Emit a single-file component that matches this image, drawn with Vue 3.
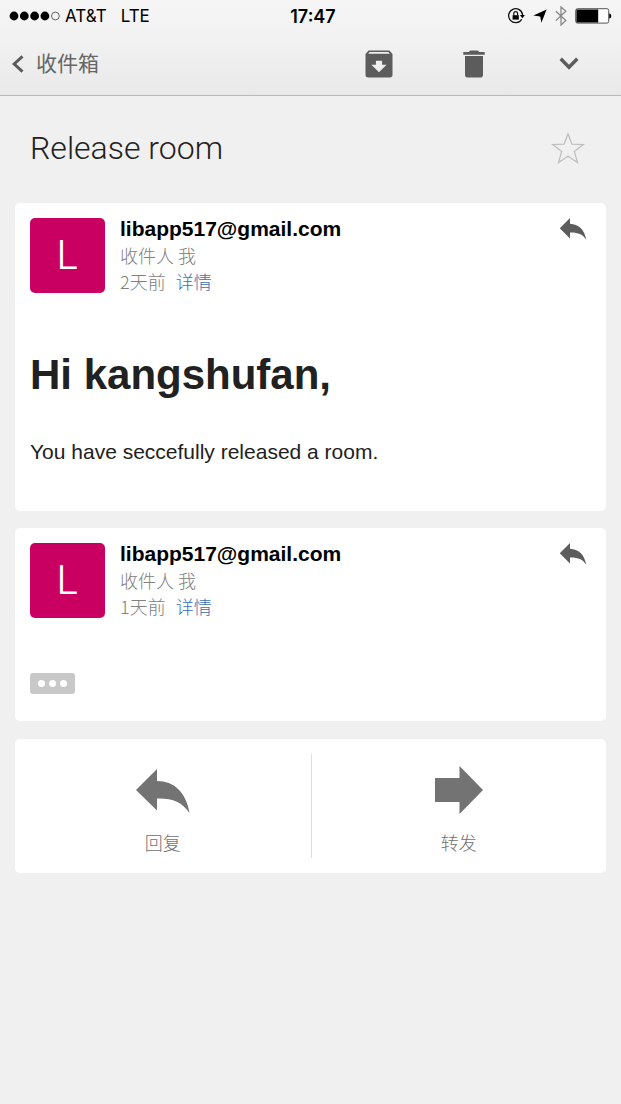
<script setup>
const messages = [
  {
    id: 1,
    sender: 'libapp517@gmail.com',
    age: '2天前',
    greeting: 'Hi kangshufan,',
    body: 'You have seccefully released a room.',
  },
  { id: 2, sender: 'libapp517@gmail.com', age: '1天前' },
]
</script>

<template>
  <div class="screen">
    <header class="top">
      <div class="status">
        <div class="carrier">
          <svg class="signal" viewBox="0 0 52 12" aria-hidden="true">
            <circle cx="5" cy="6" r="4.4" />
            <circle cx="15.3" cy="6" r="4.4" />
            <circle cx="25.6" cy="6" r="4.4" />
            <circle cx="35.9" cy="6" r="4.4" />
            <circle cx="46.4" cy="6" r="3.9" fill="none" stroke="#555" stroke-width="0.9" />
          </svg>
          <span>AT&amp;T</span>
          <span class="network">LTE</span>
        </div>
        <time class="clock">17:47</time>
        <div class="indicators">
          <svg width="18" height="18" viewBox="0 0 18 18" aria-hidden="true">
            <path d="M14.7 12.2A7 7 0 1 1 15.6 8" fill="none" stroke="#111" stroke-width="1.3" />
            <path d="M12.9 8h5l-2.5 3.2z" />
            <path d="M5.6 8.2h6.2v4.4H5.6z" />
            <path d="M6.8 8.4V6.5a1.9 1.9 0 0 1 3.8 0v1.9" fill="none" stroke="#111" stroke-width="1.2" />
          </svg>
          <svg width="14" height="14" viewBox="0 0 14 14" aria-hidden="true">
            <path d="M13.6.4 8.4 13.8 7.2 7.6.4 6.4z" />
          </svg>
          <svg width="12" height="20" viewBox="0 0 12 20" aria-hidden="true">
            <path d="M.8 5.2 10.8 14.6 6 19V1l4.8 4.2L.8 14.6" fill="none" stroke="#888" stroke-width="1.3" />
          </svg>
          <svg width="37" height="16" viewBox="0 0 37 16" aria-hidden="true">
            <rect x=".7" y=".7" width="33" height="14.4" rx="1.8" fill="#fff" stroke="#555" stroke-width="1" />
            <path d="M1.4 1.4h21.8v13H1.4zM34.2 5.4c1.6.3 2 1.2 2 2.5s-.4 2.2-2 2.5z" />
          </svg>
        </div>
      </div>
      <nav class="toolbar">
        <button class="back" type="button">
          <svg width="12" height="18" viewBox="0 0 12 18" aria-hidden="true">
            <path d="M10.5 1.3 2.2 9l8.3 7.7" fill="none" stroke="#5c5c5c" stroke-width="3" />
          </svg>
          <span>收件箱</span>
        </button>
        <div class="tools">
          <button class="icon" type="button" aria-label="归档">
            <svg width="28" height="28" viewBox="0 0 28 28" fill="#5c5c5c" aria-hidden="true">
              <path fill-rule="evenodd" d="M3.6.5h20.8L27.5 4v20.8a2.7 2.7 0 0 1-2.7 2.7H3.2A2.7 2.7 0 0 1 .5 24.8V4zM4.6 1.9 3.2 3.7h21.6l-1.4-1.8zM10.9 10.8v4H6.4l7.6 7.4 7.6-7.4h-4.5v-4z" />
            </svg>
          </button>
          <button class="icon" type="button" aria-label="删除">
            <svg width="22" height="28" viewBox="0 0 22 28" fill="#5c5c5c" aria-hidden="true">
              <path d="M.3 2h5.5L7.2.5h7.6L16.2 2h5.5v2.8H.3zM2 6h18v18.7a2.8 2.8 0 0 1-2.8 2.8H4.8A2.8 2.8 0 0 1 2 24.7z" />
            </svg>
          </button>
          <button class="icon" type="button" aria-label="更多">
            <svg width="20" height="13" viewBox="0 0 20 13" aria-hidden="true">
              <path d="m1.7 1.7 8.3 8.5 8.3-8.5" fill="none" stroke="#5c5c5c" stroke-width="3.4" />
            </svg>
          </button>
        </div>
      </nav>
    </header>

    <main>
      <div class="subject">
        <h1>Release room</h1>
        <button class="icon" type="button" aria-label="加星标">
          <svg width="34" height="32" viewBox="0 0 34 32" aria-hidden="true">
            <path d="m17 1.8 3.9 10.4 11.5.3-9.1 7 3.2 11L17 24.2l-9.5 6.3 3.2-11-9.1-7 11.5-.3z" fill="none" stroke="#bdbdbd" stroke-width="1.2" />
          </svg>
        </button>
      </div>

      <div class="thread">
        <article v-for="m in messages" :key="m.id" class="card message">
          <div class="head">
            <div class="avatar">L</div>
            <div class="meta">
              <strong>{{ m.sender }}</strong>
              <span>收件人 我</span>
              <span class="when">{{ m.age }}<a href="#">详情</a></span>
            </div>
            <button class="icon reply" type="button" aria-label="回复">
              <svg width="28" height="22" viewBox="0 0 54 44" fill="#5c5c5c" aria-hidden="true">
                <path d="M.5 20.5 21 0v11.5C38 12.500 50 23 53.500 43.500 46 32 36 28.500 21 29v12z" />
              </svg>
            </button>
          </div>
          <template v-if="m.greeting">
            <h2>{{ m.greeting }}</h2>
            <p>{{ m.body }}</p>
          </template>
          <button v-else class="expand" type="button" aria-label="展开">
            <i></i><i></i><i></i>
          </button>
        </article>

        <div class="card actions">
          <button type="button">
            <svg width="54" height="48" viewBox="0 0 54 48" fill="#737373" aria-hidden="true">
              <path d="M0 24 21 3v12C38 15 50 26 53.600 47 46 36 36 32 21 32.500v12z" />
            </svg>
            <span>回复</span>
          </button>
          <button type="button">
            <svg width="48" height="48" viewBox="0 0 48 48" fill="#737373" aria-hidden="true">
              <path d="M0 12h24.500V0L48 24 24.500 48V36H0z" />
            </svg>
            <span>转发</span>
          </button>
        </div>
      </div>
    </main>
  </div>
</template>

<style>
body {
  background: #f0f0f0;
}
</style>

<style scoped>
.screen {
  min-height: 100vh;
  background: #f0f0f0;
  color: #212121;
  font-family: "Liberation Sans", "Noto Sans CJK SC", sans-serif;
}
button {
  border: 0;
  padding: 0;
  background: none;
  color: inherit;
  font: inherit;
  cursor: pointer;
}
svg {
  display: block;
}
.top {
  background: linear-gradient(#f5f5f5, #f2f2f2 40%, #e9e9e9);
  border-bottom: 1px solid #b8b8b8;
}
.status {
  display: grid;
  grid-template-columns: 1fr auto 1fr;
  align-items: center;
  height: 32px;
  padding: 0 9px;
  color: #000;
  font-family: Inter, sans-serif;
  font-size: 17px;
}
.carrier {
  display: flex;
  align-items: center;
  gap: 4px;
}
.signal {
  width: 52px;
  height: 12px;
}
.network {
  margin-left: 10px;
}
.clock {
  font-size: 18px;
  font-weight: 600;
  padding-left: 5px;
}
.indicators {
  display: flex;
  justify-content: flex-end;
  align-items: center;
  gap: 8px;
}
.toolbar {
  display: flex;
  align-items: center;
  justify-content: space-between;
  height: 63px;
  padding: 0 41px 0 12px;
}
.back {
  display: flex;
  align-items: center;
  gap: 12px;
  color: #666;
  font-size: 21px;
  line-height: 30px;
}
.tools {
  display: grid;
  grid-template-columns: repeat(3, 22px);
  justify-items: center;
  gap: 73px;
}
.icon {
  display: grid;
  place-items: center;
}
.subject {
  display: flex;
  align-items: center;
  justify-content: space-between;
  height: 103px;
  padding: 0 36px 4px 30px;
}
h1 {
  margin: 0;
  font-family: Roboto, sans-serif;
  font-size: 32px;
  font-weight: 300;
  line-height: 40px;
}
.thread {
  display: grid;
  gap: 17px;
  padding: 0 15px 24px;
}
.card {
  background: #fff;
  border-radius: 5px;
}
.message {
  padding: 13px 15px 27px;
}
.head {
  display: flex;
  align-items: center;
  gap: 15px;
}
.avatar {
  display: grid;
  place-items: center;
  width: 75px;
  height: 75px;
  border-radius: 5px;
  background: #c90062;
  color: #fff;
  font-family: Inter, sans-serif;
  font-size: 40px;
  font-weight: 300;
  line-height: 48px;
}
.meta {
  display: grid;
  flex: 1;
  grid-auto-rows: 26px;
  line-height: 26px;
  color: #808080;
  font-family: "Noto Sans CJK SC", sans-serif;
  font-size: 18px;
  font-weight: 300;
}
.meta strong {
  color: #000;
  font-family: "Liberation Sans", sans-serif;
  font-size: 21px;
  font-weight: 700;
}
.when a {
  margin-left: 10px;
  color: #3a70b0;
  text-decoration: none;
}
.reply {
  align-self: flex-start;
  margin: 2px 4px 0 0;
}
h2 {
  margin: 56px 0 0;
  font-size: 42px;
  line-height: 50px;
}
p {
  margin: 38px 0 18px;
  font-size: 21px;
  line-height: 28px;
}
.expand {
  display: flex;
  align-items: center;
  justify-content: center;
  gap: 4px;
  width: 45px;
  height: 21px;
  margin-top: 54px;
  border-radius: 3px;
  background: #c8c8c8;
}
.expand i {
  width: 7px;
  height: 7px;
  border-radius: 50%;
  background: #fff;
}
.actions {
  display: grid;
  grid-template-columns: 1fr 1fr;
  margin-top: 1px;
  padding: 15px 0;
}
.actions button {
  display: grid;
  justify-items: center;
  align-content: end;
  gap: 15px;
  height: 104px;
  padding-bottom: 3px;
  color: #707070;
  font-family: "Noto Sans CJK SC", sans-serif;
  font-size: 18px;
  font-weight: 300;
  line-height: 26px;
}
.actions button + button {
  border-left: 1px solid #dedede;
}
</style>
